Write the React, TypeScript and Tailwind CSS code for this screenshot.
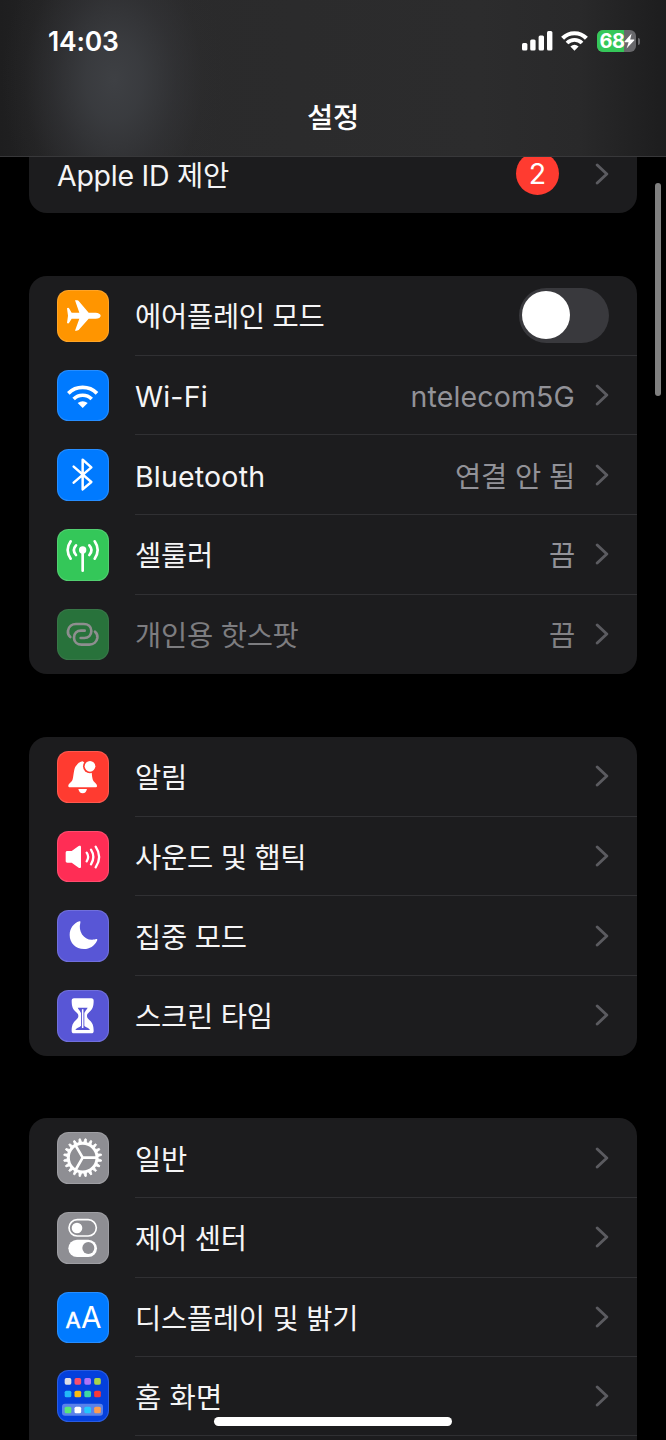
import React from 'react'

type RowProps = {
  icon?: React.ReactNode
  label: string
  value?: string
  right?: React.ReactNode
  disabled?: boolean
  last?: boolean
  latin?: boolean
}

function Chevron() {
  return (
    <svg className="w-[14px] h-[22px] shrink-0" viewBox="0 0 14 22" fill="none">
      <path d="M2.2 2L11.8 11L2.2 20" stroke="#5b5b60" strokeWidth="2.9" strokeLinecap="round" strokeLinejoin="round" />
    </svg>
  )
}

function Tile({ color, children }: { color: string; children: React.ReactNode }) {
  return (
    <div className={`w-[51.6px] h-[51.6px] shrink-0 rounded-[11.5px] overflow-hidden border border-white/15 ${color}`}>
      <svg className="w-[52px] h-[52px] -m-px max-w-none" viewBox="0 0 156 156" fill="none">
        {children}
      </svg>
    </div>
  )
}

function Row({ icon, label, value, right, disabled, last, latin }: RowProps) {
  return (
    <div className="flex items-center h-[79.7px] pl-[28px]">
      {icon && <div className={disabled ? 'mr-[26.4px] opacity-50' : 'mr-[26.4px]'}>{icon}</div>}
      <div className={`flex flex-1 items-center h-full pr-[28px] border-b ${last ? 'border-transparent' : 'border-[#303033]'}`}>
        <p className={`flex-1 pt-[4px] whitespace-nowrap text-[28.5px] leading-[40px] ${latin ? 'tracking-[0.2px]' : 'tracking-[-0.25px]'} ${disabled ? 'text-[#7d7d80]' : 'text-[#f5f5f6]'}`}>
          {label}
        </p>
        {value && (
          <p className={`pt-[4px] mr-[20px] whitespace-nowrap text-[28.5px] leading-[40px] ${value === 'ntelecom5G' ? 'tracking-[0.15px]' : 'tracking-[-0.15px]'} ${disabled ? 'text-[#818184]' : 'text-[#929298]'}`}>
            {value}
          </p>
        )}
        {right || <Chevron />}
      </div>
    </div>
  )
}

function Group({ children }: { children: React.ReactNode }) {
  return <section className="mx-[29px] rounded-[18px] bg-[#1c1c1e] overflow-hidden shrink-0">{children}</section>
}

function Wifi() {
  return (
    <>
      <path d="M34 70A61 61 0 0 1 120 70" stroke="#fff" strokeWidth="11" />
      <path d="M50 87A38 38 0 0 1 104 87" stroke="#fff" strokeWidth="11" />
      <path d="M62 99Q77 88 92 99L77 114Z" fill="#fff" />
    </>
  )
}

function Plane() {
  return (
    <path
      d="M131 77C131 72 124 68 116 68H95L67 35C64 31 60 30 54 31L67 68H44L36 55C35 53 32 53 30 55L33 77L30 99C32 101 35 101 36 99L44 86H67L54 122C60 123 64 122 67 118L95 86H116C124 86 131 82 131 77Z"
      fill="#fff"
    />
  )
}

function Bell() {
  return (
    <>
      <path
        d="M77 31C67 33 63 37 60 41C50 49 51 68 47 85C45 94 34 98 34 105C34 108 36 109 39 109H115C118 109 120 108 120 105C120 98 109 94 107 85C104 73 105 63 102 50Z"
        fill="#fff"
      />
      <path d="M64 114H90C88 122 84 127 77 127C70 127 66 122 64 114Z" fill="#fff" />
      <circle cx="99" cy="46" r="21" fill="#ff3b30" />
      <circle cx="99" cy="46" r="16" fill="#fff" />
    </>
  )
}

function Gear() {
  const teeth = Array.from({ length: 20 }, (_, i) => i * 18 + 9)
  return (
    <g stroke="#fff">
      {teeth.map((a) => (
        <path key={a} d="M120 72.5L134 75V79L120 81.5Z" fill="#fff" strokeWidth="2.5" strokeLinejoin="round" transform={`rotate(${a} 77 77)`} />
      ))}
      <circle cx="77" cy="77" r="43" strokeWidth="9" />
      <path d="M77 77H118M77 77L56.5 41.5M77 77L56.5 112.5" strokeWidth="8" />
    </g>
  )
}

function HomeScreen() {
  const rows = [
    { y: 24, colors: ['#dddde6', '#f8506e', '#ad74f8', '#a8d44c'] },
    { y: 62, colors: ['#22b8f8', '#fbbc14', '#3ed8a4', '#f83838'] },
    { y: 110, colors: ['#58e878', '#ffffff', '#22c8ff', '#fb9c50'] },
  ]
  return (
    <>
      <rect x="15" y="101" width="123" height="36" rx="9" fill="#5a82ea" />
      {rows.map((row) =>
        row.colors.map((c, i) => <rect key={c} x={23 + i * 29.5} y={row.y} width="20" height="20" rx="5" fill={c} />)
      )}
    </>
  )
}

function StatusBar() {
  return (
    <div className="flex items-center justify-between h-[82px] pl-[48px] pr-[27px]">
      <p className="text-[26.5px] leading-[32px] font-semibold tracking-[-0.2px]">14:03</p>
      <div className="flex items-center">
        <svg className="w-[31px] h-[20px]" viewBox="0 0 31 20" fill="#fff">
          <rect x="0" y="12" width="5.4" height="7.5" rx="1.5" />
          <rect x="8.2" y="8.5" width="5.4" height="11" rx="1.5" />
          <rect x="16.6" y="4.5" width="5.4" height="15" rx="1.5" />
          <rect x="25" y="0" width="5.4" height="19.5" rx="1.5" />
        </svg>
        <svg className="w-[27px] h-[20px] ml-[8px]" viewBox="0 0 27 20" fill="none">
          <path d="M1.6 7.2A16.8 16.8 0 0 1 25.4 7.2" stroke="#fff" strokeWidth="4.2" />
          <path d="M6 12A10.6 10.6 0 0 1 21 12" stroke="#fff" strokeWidth="3.8" />
          <path d="M9.4 15.6Q13.5 12 17.6 15.6L13.5 19.8Z" fill="#fff" />
        </svg>
        <div className="relative flex items-center w-[39px] h-[22px] ml-[9px] rounded-[6px] overflow-hidden bg-[#68686b]">
          <div className="w-[27px] h-full bg-[#35c759]" />
          <p className="absolute left-[2.5px] top-0 text-[20px] leading-[22px] font-bold tracking-[-0.4px]">68</p>
          <svg className="absolute left-[27px] top-[3px] w-[11px] h-[16px]" viewBox="0 0 11 16" fill="#fff">
            <path d="M7.6 0.5L0.5 8.6Q0.3 9.2 1 9.2H4.6L2.6 15.5L10.3 7.2Q10.6 6.6 9.9 6.5H6.2Z" />
          </svg>
        </div>
        <div className="w-[2.5px] h-[7px] ml-[1.5px] -mr-[1px] rounded-r-full bg-[#68686b]" />
      </div>
    </div>
  )
}

export default function App() {
  return (
    <div className="relative flex flex-col w-full h-[1440px] overflow-hidden bg-black text-white font-['Inter','Noto_Sans_CJK_KR',sans-serif]">
      <header className="relative z-10 h-[157px] shrink-0 border-b border-[#38383a] bg-[#2a2a2b] bg-[radial-gradient(ellipse_112px_160px_at_114px_80px,#3e4044_0px,rgba(60,62,66,0.85)_25%,rgba(54,55,59,0.5)_55%,rgba(46,46,48,0.2)_80%,rgba(42,42,43,0)_100%),linear-gradient(to_right,#1e1e1f_0px,#2a2a2b_110px,#2c2c2d_480px,#29292a_580px,#1d1d1e_666px)]">
        <StatusBar />
        <h1 className="pt-[15.5px] text-center text-[28.5px] leading-[40px] font-medium tracking-[-0.3px]">설정</h1>
      </header>

      <main className="flex flex-col gap-[62.6px] -mt-[23.4px]">
        <Group>
          <div className="relative top-[1px]">
            <Row
              label="Apple ID 제안"
              last
              right={
                <div className="flex items-center">
                  <div className="flex items-center justify-center w-[43px] h-[43px] mr-[36px] rounded-full bg-[#ff3b30] text-[28.5px]">2</div>
                  <Chevron />
                </div>
              }
            />
          </div>
        </Group>

        <Group>
          <Row
            icon={<Tile color="bg-[#ff9500]"><Plane /></Tile>}
            label="에어플레인 모드"
            right={
              <div className="flex items-center w-[90px] h-[55px] p-[3px] rounded-full bg-[#39393d]">
                <div className="w-[48px] h-[48px] rounded-full bg-white" />
              </div>
            }
          />
          <Row icon={<Tile color="bg-[#007aff]"><Wifi /></Tile>} label="Wi-Fi" value="ntelecom5G" latin />
          <Row
            icon={
              <Tile color="bg-[#007aff]">
                <path d="M50 53L103 99L77 121V32L103 55L50 101" stroke="#fff" strokeWidth="7.5" strokeLinecap="round" strokeLinejoin="round" />
              </Tile>
            }
            label="Bluetooth"
            value="연결 안 됨"
            latin
          />
          <Row
            icon={
              <Tile color="bg-[#34c759]">
                <circle cx="77" cy="63" r="11" fill="#fff" />
                <path d="M77 63V125" stroke="#fff" strokeWidth="8" strokeLinecap="round" />
                <path d="M41 37Q23 63 41 89M113 37Q131 63 113 89M57 49Q44 63 57 78M97 49Q110 63 97 78" stroke="#fff" strokeWidth="8" strokeLinecap="round" />
              </Tile>
            }
            label="셀룰러"
            value="끔"
          />
          <Row
            icon={
              <Tile color="bg-[#34c759]">
                <path
                  d="M40 84C34 79 32 72 33 65C35 53 45 45 57 45H80C93 45 103 53 103 66C103 79 94 87 82 87H71M114 68C120 73 122 80 121 87C119 99 109 107 97 107H74C61 107 51 99 51 86C51 73 60 65 72 65H83"
                  stroke="#fff"
                  strokeWidth="8"
                  strokeLinecap="round"
                />
              </Tile>
            }
            label="개인용 핫스팟"
            value="끔"
            disabled
            last
          />
        </Group>

        <Group>
          <Row icon={<Tile color="bg-[#ff3b30]"><Bell /></Tile>} label="알림" />
          <Row
            icon={
              <Tile color="bg-[#ff2d55]">
                <path d="M31 60H44L65 45C69 43 72 44 72 48V107C72 111 69 112 65 110L44 95H31C28 95 26 93 26 90V65C26 62 28 60 31 60Z" fill="#fff" />
                <path d="M89 65Q98 78 89 91M102 56Q116 78 102 100M116 47Q137 78 116 109" stroke="#fff" strokeWidth="7" strokeLinecap="round" />
              </Tile>
            }
            label="사운드 및 햅틱"
          />
          <Row
            icon={
              <Tile color="bg-[#5856d6]">
                <path d="M67 34C70 33 71 35 70 38C63 64 80 90 106 89C111 89 114 88 118 87C121 87 122 89 120 92C112 108 98 117 81 117C56 117 38 99 38 75C38 56 50 39 67 34Z" fill="#fff" />
              </Tile>
            }
            label="집중 모드"
          />
          <Row
            icon={
              <Tile color="bg-[#5856d6]">
                <path
                  d="M51 25H103C108 25 110 28 110 32C110 50 106 58 97 66C91 71 90 74 90 78C90 82 91 85 97 90C106 98 110 106 110 123C110 128 108 130 103 130H51C46 130 44 128 44 123C44 106 48 98 57 90C63 85 64 82 64 78C64 74 63 71 57 66C48 58 44 50 44 32C44 28 46 25 51 25Z"
                  fill="#fff"
                />
                <path d="M62 53H92C90 58 84 63 82 69V107C85 112 95 112 99 120H55C59 112 69 112 72 107V69C70 63 64 58 62 53Z" fill="#5856d6" />
                <path d="M77 58V114" stroke="#fff" strokeWidth="4.5" />
              </Tile>
            }
            label="스크린 타임"
            last
          />
        </Group>

        <Group>
          <Row icon={<Tile color="bg-[#8e8e93]"><Gear /></Tile>} label="일반" />
          <Row
            icon={
              <Tile color="bg-[#8e8e93]">
                <rect x="36" y="23" width="82" height="49" rx="24.5" stroke="#fff" strokeWidth="5" />
                <circle cx="60" cy="48" r="16" fill="#fff" />
                <rect x="34" y="83" width="86" height="52" rx="26" fill="#fff" />
                <circle cx="94" cy="108" r="18" fill="#8e8e93" />
              </Tile>
            }
            label="제어 센터"
          />
          <Row
            icon={
              <Tile color="bg-[#007aff]">
                <text x="48" y="109" fontSize="66" fill="#fff" stroke="#fff" strokeWidth="1.5" textAnchor="middle">A</text>
                <text x="103" y="109" fontSize="89" fill="#fff" textAnchor="middle">A</text>
              </Tile>
            }
            label="디스플레이 및 밝기"
          />
          <div className="relative -top-[1px]">
            <Row
              icon={<Tile color="bg-[#0440dc]"><HomeScreen /></Tile>}
              label="홈 화면"
              latin
            />
          </div>
          <Row label="" last />
        </Group>
      </main>

      {/* scroll thumb and home indicator float above the list */}
      <div className="absolute right-[5px] top-[183px] w-[6px] h-[213px] rounded-full bg-[#808080]" />
      <div className="absolute left-[214px] bottom-[14px] w-[238px] h-[9px] rounded-full bg-white" />
    </div>
  )
}
